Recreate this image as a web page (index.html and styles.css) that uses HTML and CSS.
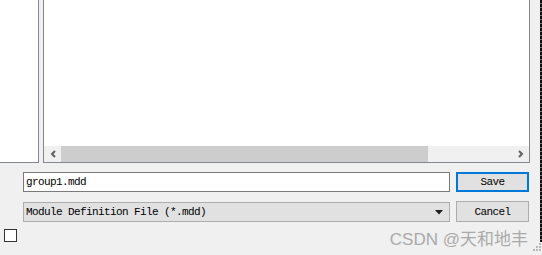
FILE: index.html
```html
<!DOCTYPE html>
<html lang="en">
<head>
    <meta charset="UTF-8">
    <meta name="viewport" content="width=device-width, initial-scale=1.0">
    <title>Save As</title>
    <link rel="stylesheet" href="styles.css">
</head>
<body>

    <div class="top">
        <div class="places"></div>
        <div class="list">
            <div class="list-body"></div>
            <div class="hscroll">
                <span class="arrow">
                    <svg width="6" height="8" viewBox="0 0 6 8"><polyline points="5,1 2,4 5,7" fill="none" stroke="#606060" stroke-width="2"/></svg>
                </span>
                <div class="track"><div class="thumb"></div></div>
                <span class="arrow">
                    <svg width="6" height="8" viewBox="0 0 6 8"><polyline points="1,1 4,4 1,7" fill="none" stroke="#606060" stroke-width="2"/></svg>
                </span>
            </div>
        </div>
        <div class="edge"></div>
    </div>

    <div class="form">
        <div class="row">
            <div class="field">group1.mdd</div>
            <button class="btn default">Save</button>
        </div>
        <div class="row">
            <div class="combo">
                <span>Module Definition File (*.mdd)</span>
                <svg width="8" height="5" viewBox="0 0 8 5"><polygon points="0,0 8,0 4,4.5" fill="#1e1e1e"/></svg>
            </div>
            <button class="btn">Cancel</button>
        </div>
    </div>

    <div class="bottom">
        <span class="check"></span>
        <span class="mark">CSDN @天和地丰</span>
        <svg class="grip" width="10" height="10" viewBox="0 0 10 10">
            <rect x="7" y="1" width="2" height="2" fill="#b8b8b8"/>
            <rect x="4" y="4" width="2" height="2" fill="#b8b8b8"/>
            <rect x="7" y="4" width="2" height="2" fill="#b8b8b8"/>
            <rect x="1" y="7" width="2" height="2" fill="#b8b8b8"/>
            <rect x="4" y="7" width="2" height="2" fill="#b8b8b8"/>
            <rect x="7" y="7" width="2" height="2" fill="#b8b8b8"/>
        </svg>
    </div>

</body>
</html>
```

FILE: styles.css
```css
body {
    margin: 0;
    width: 542px;
    height: 255px;
    overflow: hidden;
    background-color: #f0f0f0;
    font-family: "Liberation Mono", monospace;
    font-size: 11px;
    letter-spacing: -0.6px;
    color: #000;
}
.top {
    display: flex;
    height: 163px;
}
.places {
    width: 38px;
    background-color: #fff;
    border-right: 1px solid #828790;
    border-bottom: 1px solid #828790;
}
.list {
    display: flex;
    flex-direction: column;
    width: 485px;
    margin-left: 4px;
    border: 1px solid #828790;
    border-top: none;
}
.list-body {
    flex: 1;
    background-color: #fff;
}
.hscroll {
    display: flex;
    height: 16px;
    background-color: #f0f0f0;
}
.arrow {
    width: 17px;
    display: flex;
    align-items: center;
    justify-content: center;
}
.track {
    flex: 1;
}
.thumb {
    width: 367px;
    height: 100%;
    background-color: #cdcdcd;
}
.edge {
    width: 2px;
    height: 242px;
    margin-left: 10px;
    background: repeating-linear-gradient(to bottom, #111 0 3px, #6a6a6a 3px 4px);
}
.form {
    padding-left: 23px;
}
.row {
    display: flex;
    align-items: flex-start;
    margin-top: 9px;
}
.field {
    box-sizing: border-box;
    width: 427px;
    height: 20px;
    line-height: 18px;
    padding-left: 2px;
    background-color: #fff;
    border: 1px solid #7a7a7a;
}
.combo {
    box-sizing: border-box;
    width: 427px;
    height: 20px;
    margin-top: 1px;
    padding: 0 6px 0 2px;
    display: flex;
    align-items: center;
    justify-content: space-between;
    background-color: #e1e1e1;
    border: 1px solid #adadad;
}
.btn {
    box-sizing: border-box;
    width: 73px;
    height: 21px;
    margin-left: 6px;
    padding: 0;
    font: inherit;
    letter-spacing: inherit;
    color: #000;
    background-color: #e1e1e1;
    border: 1px solid #adadad;
}
.btn.default {
    height: 20px;
    border: 2px solid #0078d7;
}
.bottom {
    display: flex;
    align-items: flex-start;
    margin-top: 7px;
    padding-left: 4px;
}
.check {
    box-sizing: border-box;
    width: 13px;
    height: 13px;
    background-color: #fff;
    border: 1px solid #333;
}
.mark {
    margin-left: auto;
    margin-right: 3px;
    margin-top: -4px;
    font-family: "Liberation Sans", "Noto Sans CJK SC", sans-serif;
    font-size: 17px;
    letter-spacing: 0;
    color: #aaaaaa;
}
.grip {
    margin-left: 1px;
    margin-top: 13px;
}
```
